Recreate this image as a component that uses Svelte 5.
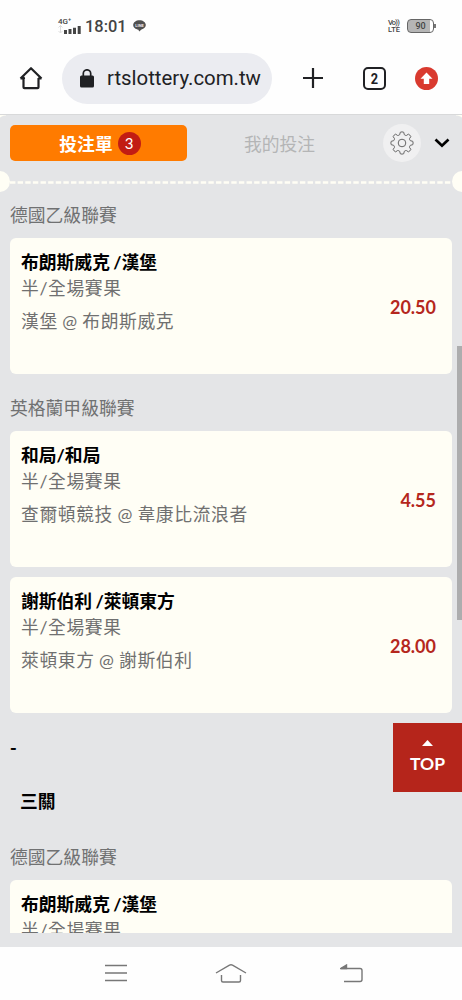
<script>
  const singles = [
    {
      league: '德國乙級聯賽',
      bets: [{ pick: '布朗斯威克 /漢堡', match: '漢堡 @ 布朗斯威克', odds: '20.50' }],
    },
    {
      league: '英格蘭甲級聯賽',
      bets: [
        { pick: '和局/和局', match: '查爾頓競技 @ 韋康比流浪者', odds: '4.55' },
        { pick: '謝斯伯利 /萊頓東方', match: '萊頓東方 @ 謝斯伯利', odds: '28.00' },
      ],
    },
  ];

  const parlay = [singles[0]];
  const market = '半/全場賽果';
  const count = singles.reduce((n, g) => n + g.bets.length, 0);

  // eight-tooth outline for the settings button
  const teeth = 8;
  const gear = Array.from({ length: teeth }, (_, i) => {
    const a = (i * 2 * Math.PI) / teeth - Math.PI / 2;
    const pt = (r, d) => `${(12 + r * Math.cos(a + d)).toFixed(2)} ${(12 + r * Math.sin(a + d)).toFixed(2)}`;
    return `${i ? 'L' : 'M'}${pt(8.7, -0.26)} L${pt(10.9, -0.16)} Q${pt(11.5, 0)} ${pt(10.9, 0.16)} L${pt(8.7, 0.26)} Q${pt(8.1, 0.39)} ${pt(8.7, 0.525)}`;
  }).join(' ') + 'Z';
</script>

{#snippet groups(list)}
  {#each list as g}
    <h3 class="league">{g.league}</h3>
    {#each g.bets as b}
      <div class="card">
        <div class="info">
          <div class="pick">{b.pick}</div>
          <div class="market">{market}</div>
          <div class="match">{b.match}</div>
        </div>
        <div class="odds">{b.odds}</div>
      </div>
    {/each}
  {/each}
{/snippet}

<div class="phone">
  <div class="status">
    <div class="signal">
      <span class="net">4G⁺</span>
      <svg width="23" height="9" viewBox="0 0 23 9">
        <path d="M2.5 0v8M.5 2.5l2-2 2 2M.5 6l2 2 2-2" fill="none" stroke="#ddd" />
        <path d="M6 5h3v4H6zM10.5 4h3v5h-3zM15 2.7h3V9h-3zM19.7 1h3v8h-3z" fill="#444" />
      </svg>
    </div>
    <span class="time">18:01</span>
    <svg class="line-app" width="13" height="12" viewBox="0 0 13 12">
      <path d="M6.5 .3C3 .3.2 2.4.2 5.1c0 2.4 2.3 4.3 5.2 4.6l.8 1.8 2.3-2c2.5-.5 4.300-2.300 4.300-4.400C12.800 2.400 10 .3 6.500 .3z" fill="#505050" />
      <text x="6.5" y="6.700" text-anchor="middle" font-size="4" font-weight="700" fill="#eee">LINE</text>
    </svg>
    <div class="volte"><span>Vo))</span><span>LTE</span></div>
    <div class="battery">90</div>
  </div>

  <div class="browser">
    <svg class="home" width="24" height="24" viewBox="0 0 24 24" fill="none" stroke="#202124" stroke-width="2.2">
      <path d="M4.500 12v9.200q0 1 1 1h13q1 0 1-1V12M1.500 12.500H5L4.500 11M22.500 12.500H19M1.500 12.500L12 2.200l10.500 10.300" stroke-linejoin="round" />
    </svg>
    <div class="url">
      <svg width="14" height="19" viewBox="0 0 14 19">
        <rect x="0" y="6.5" width="14" height="12" rx="1.5" fill="#202124" />
        <path d="M3.3 7V4.500a3.700 3.700 0 0 1 7.400 0V7" fill="none" stroke="#202124" stroke-width="1.7" />
      </svg>
      <span>rtslottery.com.tw</span>
    </div>
    <svg class="plus" width="20" height="20" viewBox="0 0 20 20" stroke="#202124" stroke-width="2.2">
      <path d="M10 0v20M0 10h20" />
    </svg>
    <div class="tabcount"><span>2</span></div>
    <svg class="update" width="23" height="23" viewBox="0 0 23 23">
      <circle cx="11.5" cy="11.5" r="11.5" fill="#d93a2f" />
      <path d="M11.500 5.500l6 6.200h-3.300v5.300H8.800v-5.300H5.500z" fill="#fff" />
    </svg>
  </div>

  <main class="slip">
    <div class="tabs">
      <button class="tab active">投注單 <span class="count">{count}</span></button>
      <button class="tab mine">我的投注</button>
      <button class="gear" aria-label="設定">
        <svg width="24" height="24" viewBox="0 0 24 24" fill="none" stroke="#666" stroke-width="1" stroke-linejoin="round">
          <path d={gear} />
          <circle cx="12" cy="12" r="3.8" />
        </svg>
      </button>
      <svg class="chevron" width="16" height="10" viewBox="0 0 16 10" fill="none" stroke="#000" stroke-width="2.7">
        <path d="M1.500 1.500L8 7.700l6.500-6.200" />
      </svg>
    </div>
    <div class="perforation">
      <i></i>
      <svg height="3"><line x1="0" y1="1.5" x2="442" y2="1.5" stroke="#fffef5" stroke-width="2.5" stroke-dasharray="5.4 2.23" /></svg>
      <i></i>
    </div>

    <div class="list">
      {@render groups(singles)}
      <div class="dash">-</div>
      <h2 class="parlay">三關</h2>
      {@render groups(parlay)}
    </div>

    <div class="scrollbar"></div>
    <button class="top">
      <svg width="11" height="6" viewBox="0 0 11 6"><path d="M5.500 0L11 6H0z" fill="#fff" /></svg>
      TOP
    </button>
  </main>

  <nav class="softkeys">
    <svg width="22" height="18" viewBox="0 0 22 18"><path d="M0 1.500h22M0 9h22M0 16.500h22" /></svg>
    <svg class="home-key" width="32" height="20" viewBox="0 0 32 20"><path d="M1 10L14.500 2.200q1.500-.8 3 0L31 10M6.500 12v5.500q0 1.500 1.500 1.500h16q1.500 0 1.500-1.500V12" /></svg>
    <svg width="23" height="19" viewBox="0 0 23 19"><path d="M1 4.500h19q2 0 2 2v9q0 2-2 2H4" /><path class="head" d="M.5 4.500L6.500 1v3.500z" /></svg>
  </nav>
</div>

<style>
  :global(body) {
    margin: 0;
    background: #fefefe;
  }

  .phone {
    width: 462px;
    height: 1000px;
    display: flex;
    flex-direction: column;
    overflow: hidden;
    font-family: 'Lato', 'Noto Sans CJK TC', sans-serif;
    background: #fefefe;
  }

  button {
    border: 0;
    padding: 0;
    background: none;
    font: inherit;
  }
  h2, h3 { margin: 0; }
  svg { display: block; flex-shrink: 0; }

  .status {
    height: 50px;
    box-sizing: border-box;
    padding: 2px 26px 0 58px;
    display: flex;
    align-items: center;
    font-family: Roboto, sans-serif;
    color: #444;
  }
  .signal { width: 23px; }
  .net {
    display: block;
    font-size: 8px;
    line-height: 7px;
    font-weight: 500;
  }
  .time {
    margin-left: 4px;
    font-size: 16.4px;
    font-weight: 500;
    width: 41px;
    white-space: nowrap;
  }
  .line-app { margin-left: 7px; }
  .volte {
    margin-left: auto;
    width: 14px;
    display: flex;
    flex-direction: column;
    font-size: 7.5px;
    line-height: 7px;
    font-weight: 500;
  }
  .volte span:first-child { letter-spacing: -0.8px; }
  .battery {
    position: relative;
    width: 25px;
    height: 12px;
    margin-left: 5px;
    margin-right: 2px;
    border: 1px solid #666;
    border-radius: 4px;
    background: linear-gradient(90deg, #b5b5b5 88%, #fff 88%);
    font-size: 9px;
    font-weight: 500;
    line-height: 12px;
    text-align: center;
  }
  .battery::after {
    content: '';
    position: absolute;
    right: -3px;
    top: 4px;
    width: 2px;
    height: 4px;
    background: #777;
  }

  .browser {
    height: 64px;
    box-sizing: border-box;
    padding: 2px 24px 10px 19px;
    display: flex;
    align-items: center;
    color: #202124;
    font-family: Roboto, sans-serif;
  }
  .url {
    width: 210px;
    height: 51px;
    margin-left: 19px;
    padding-left: 18px;
    box-sizing: border-box;
    border-radius: 26px;
    background: #ebecf1;
    display: flex;
    align-items: center;
    gap: 13px;
    font-size: 20.4px;
    white-space: nowrap;
  }
  .plus { margin-left: 31px; }
  .tabcount {
    width: 19px;
    height: 19px;
    margin-left: 40px;
    border: 2px solid #202124;
    border-radius: 5px;
    text-align: center;
    font-size: 15px;
    line-height: 20px;
    font-weight: 700;
  }
  .tabcount span {
    display: block;
    transform: scaleX(0.85);
  }
  .update { margin-left: auto; }

  .slip {
    position: relative;
    height: 833px;
    box-sizing: border-box;
    padding-bottom: 14px;
    display: flex;
    flex-direction: column;
    /* cream corners of the ticket showing past the rounded sheet */
    background:
      radial-gradient(circle at 100% 100%, transparent 9px, #fffef5 10px) 0 0 / 6px 10px no-repeat,
      radial-gradient(circle at 0 100%, transparent 9px, #fffef5 10px) 100% 0 / 6px 10px no-repeat,
      #e4e5e7;
    border-top: 1px solid #d8d9da;
  }
  .tabs {
    height: 56px;
    flex-shrink: 0;
    padding: 0 12px 0 10px;
    display: flex;
    align-items: center;
  }
  .tab {
    width: 177px;
    height: 36px;
    font-size: 17.8px;
    color: #b4b5b6;
    display: flex;
    align-items: center;
    justify-content: center;
    gap: 5px;
  }
  .tab.active {
    background: #ff7b00;
    color: #fff;
    font-weight: 700;
    border-radius: 5px;
    padding-left: 3px;
    box-sizing: border-box;
  }
  .tab.mine {
    padding-left: 8px;
    box-sizing: border-box;
  }
  .count {
    width: 23px;
    height: 23px;
    border-radius: 50%;
    background: #c21c13;
    font-size: 15px;
    line-height: 23px;
    font-weight: 400;
  }
  .gear {
    width: 38px;
    height: 38px;
    margin-left: 19px;
    border-radius: 50%;
    background: #f0f0f1;
    display: flex;
    align-items: center;
    justify-content: center;
  }
  .chevron { margin-left: auto; }

  .perforation {
    height: 21px;
    margin: 0 -1px;
    flex-shrink: 0;
    display: flex;
    align-items: center;
    justify-content: space-between;
    overflow: hidden;
  }
  .perforation i {
    width: 11px;
    height: 21px;
    flex-shrink: 0;
    border-radius: 0 11px 11px 0;
    background: #fffef5;
  }
  .perforation i:last-child { border-radius: 11px 0 0 11px; }
  .perforation svg { width: 442px; margin-top: 2px; }

  .list {
    flex: 1;
    min-height: 0;
    overflow: hidden;
    padding: 0 10px;
  }
  .league {
    height: 57px;
    line-height: 68px;
    font-size: 17.8px;
    font-weight: 400;
    color: #707172;
  }
  .league:first-child {
    height: 46px;
    line-height: 47px;
  }
  .card {
    height: 136px;
    box-sizing: border-box;
    padding: 11px 16px 0 11px;
    display: flex;
    justify-content: space-between;
    background: #fffef5;
    border-radius: 6px;
    position: relative;
  }
  .card + .card { margin-top: 10px; }
  .pick, .market {
    font-size: 17.8px;
    line-height: 26px;
  }
  .pick {
    font-weight: 700;
    color: #000;
    word-spacing: -1px;
  }
  .market, .match {
    letter-spacing: 0.6px;
    color: #707070;
  }
  .match {
    font-size: 17.8px;
    line-height: 40px;
    word-spacing: -0.6px;
  }
  .odds {
    font-size: 18px;
    line-height: 116px;
    font-weight: 700;
    color: #b5271d;
  }

  .dash {
    height: 68px;
    line-height: 66px;
    font-family: 'Noto Sans CJK TC', sans-serif;
    font-size: 18px;
    font-weight: 700;
  }
  .parlay {
    height: 42px;
    padding-left: 10px;
    line-height: 40px;
    font-size: 17.8px;
    font-weight: 700;
  }

  .scrollbar {
    position: absolute;
    right: 0;
    top: 231px;
    width: 5px;
    height: 274px;
    background: #adadae;
  }
  .top {
    position: absolute;
    right: 0;
    top: 608px;
    width: 69px;
    height: 69px;
    background: #b5251b;
    color: #fff;
    font-size: 17.5px;
    line-height: 22px;
    font-weight: 700;
    display: flex;
    flex-direction: column;
    align-items: center;
    justify-content: center;
    gap: 7px;
  }

  .softkeys {
    flex: 1;
    padding: 0 99px 1px 105px;
    display: flex;
    align-items: center;
    justify-content: space-between;
  }
  .softkeys .home-key { margin-right: 5px; }
  .softkeys path {
    fill: none;
    stroke: #777;
    stroke-width: 1.4;
  }
  .softkeys .head { fill: #777; }
</style>
